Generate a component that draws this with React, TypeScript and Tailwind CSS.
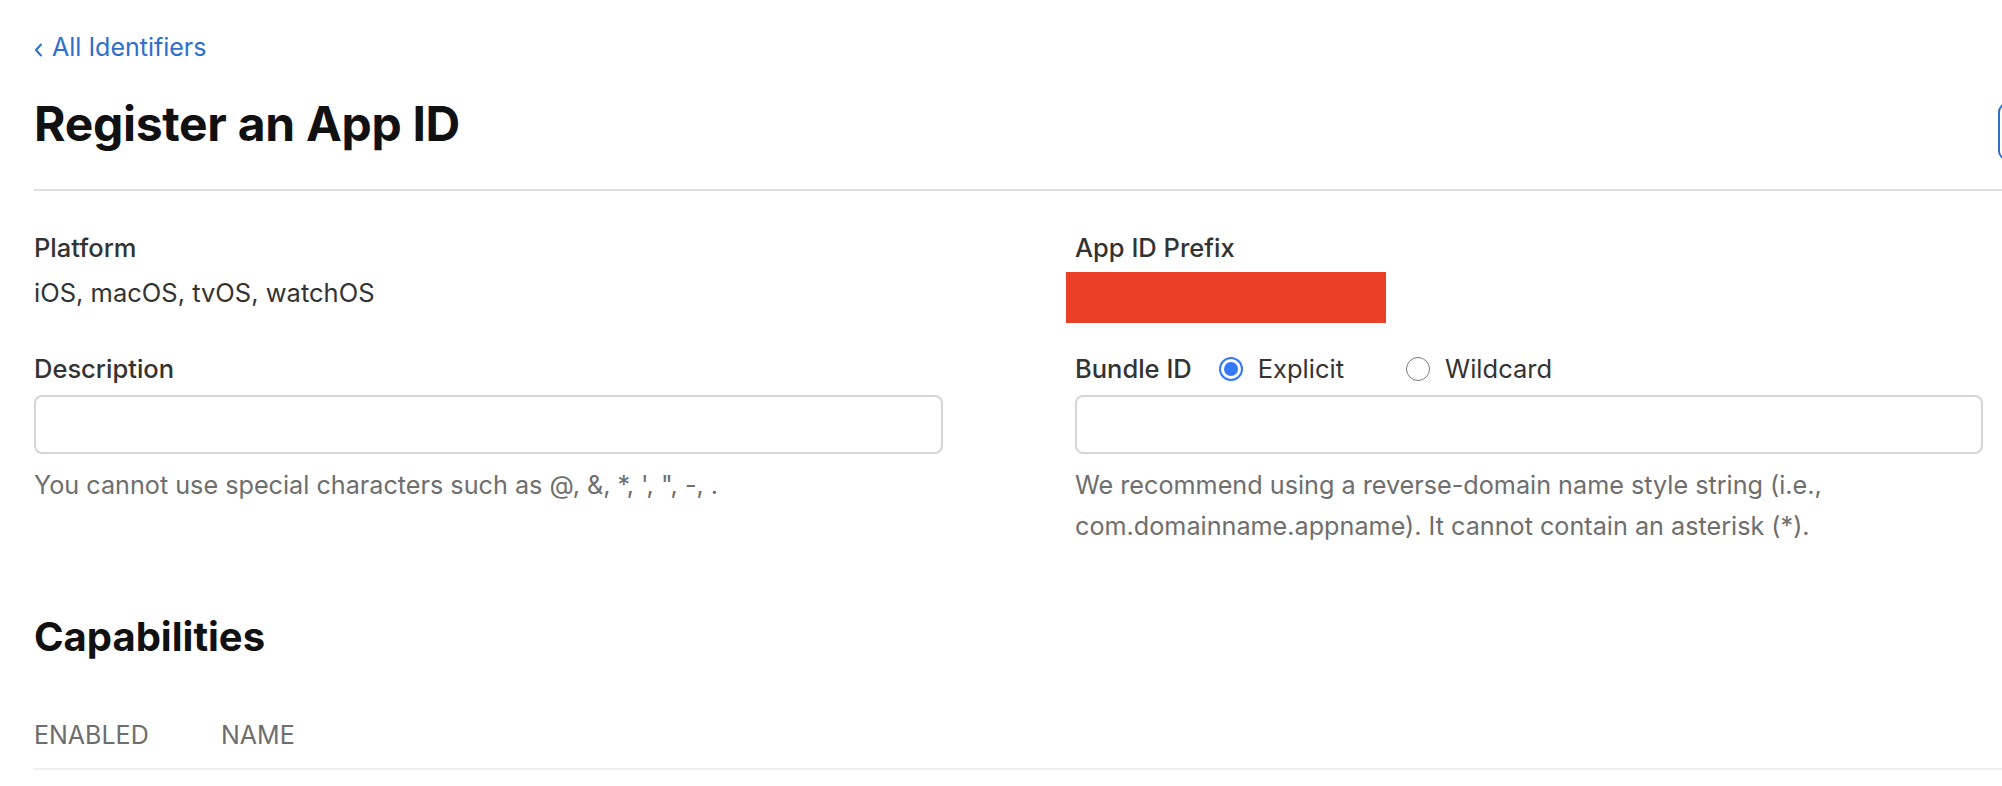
import React from "react";

function Radio({ checked }: { checked: boolean }) {
  return checked ? (
    <span className="flex h-[24px] w-[24px] items-center justify-center rounded-full border-[2px] border-[#3478f6] bg-white">
      <span className="h-[14px] w-[14px] rounded-full bg-[#3478f6]" />
    </span>
  ) : (
    <span className="h-[24px] w-[24px] rounded-full border-[1.5px] border-[#7a7a7a] bg-white" />
  );
}

export default function App() {
  return (
    <div className="min-h-screen w-full overflow-hidden bg-white font-['Inter','Liberation_Sans',sans-serif]">
      <div className="w-[2140px] pl-[34px] pt-[32px]">
        <a className="flex h-[32px] items-center text-[25px] text-[#2f6fcb]">
          <svg width="9" height="14" viewBox="0 0 9 14" className="mr-[9px] mt-[3px]">
            <path d="M7 1.5 L2 7 L7 12.5" fill="none" stroke="#2f6fcb" strokeWidth="2" strokeLinecap="round" strokeLinejoin="round" />
          </svg>
          All Identifiers
        </a>

        <div className="mt-[32px] flex items-start">
          <h1 className="h-[56px] text-[48px] font-bold leading-[56px] tracking-[-0.3px] text-[#111111]">
            Register an App ID
          </h1>
          <div className="ml-auto mt-[7px] h-[57px] w-[142px] rounded-[9px] border-[2px] border-[#2f6fcb]" />
        </div>

        <div className="mt-[29px] h-[2px] w-full bg-[#dedede]" />

        <div className="mt-[40px] grid grid-cols-[909px_908px] gap-x-[132px] gap-y-[29px] text-[25.5px] leading-[34px]">
          <div className="flex flex-col">
            <div className="font-medium text-[#333333]">Platform</div>
            <div className="mt-[11px] text-[#333333]">iOS, macOS, tvOS, watchOS</div>
          </div>
          <div className="flex flex-col">
            <div className="font-medium text-[#333333]">App ID Prefix</div>
            <div className="ml-[-9px] mt-[7px] h-[51px] w-[320px] bg-[#ea4027]" />
          </div>

          <div className="flex flex-col">
            <div className="h-[34px] font-medium text-[#333333]">Description</div>
            <div className="mt-[9px] h-[59px] rounded-[8px] border-[2px] border-[#d6d6d6] bg-white" />
            <p className="mt-[11px] text-[25.2px] leading-[41px] text-[#6e6e6e]">
              You cannot use special characters such as @, &amp;, *, ', ", -, .
            </p>
          </div>
          <div className="flex flex-col">
            <div className="flex h-[34px] items-center text-[#333333]">
              <span className="font-medium">Bundle ID</span>
              <span className="ml-[27px] flex items-center">
                <Radio checked />
                <span className="ml-[15px]">Explicit</span>
              </span>
              <span className="ml-[62px] flex items-center">
                <Radio checked={false} />
                <span className="ml-[15px]">Wildcard</span>
              </span>
            </div>
            <div className="mt-[9px] h-[59px] rounded-[8px] border-[2px] border-[#d6d6d6] bg-white" />
            <p className="mt-[11px] text-[25.2px] leading-[41px] text-[#6e6e6e]">
              We recommend using a reverse-domain name style string (i.e.,
              <br />
              com.domainname.appname). It cannot contain an asterisk (*).
            </p>
          </div>
        </div>

        <h2 className="mt-[66px] h-[48px] text-[40px] font-bold leading-[48px] text-[#111111]">Capabilities</h2>

        <div className="mt-[59px] flex h-[32px] items-center text-[25px] uppercase text-[#6e6e6e]">
          <span className="w-[187px]">Enabled</span>
          <span>Name</span>
        </div>
        <div className="mt-[16px] h-[2px] w-full bg-[#efefef]" />
      </div>
    </div>
  );
}
